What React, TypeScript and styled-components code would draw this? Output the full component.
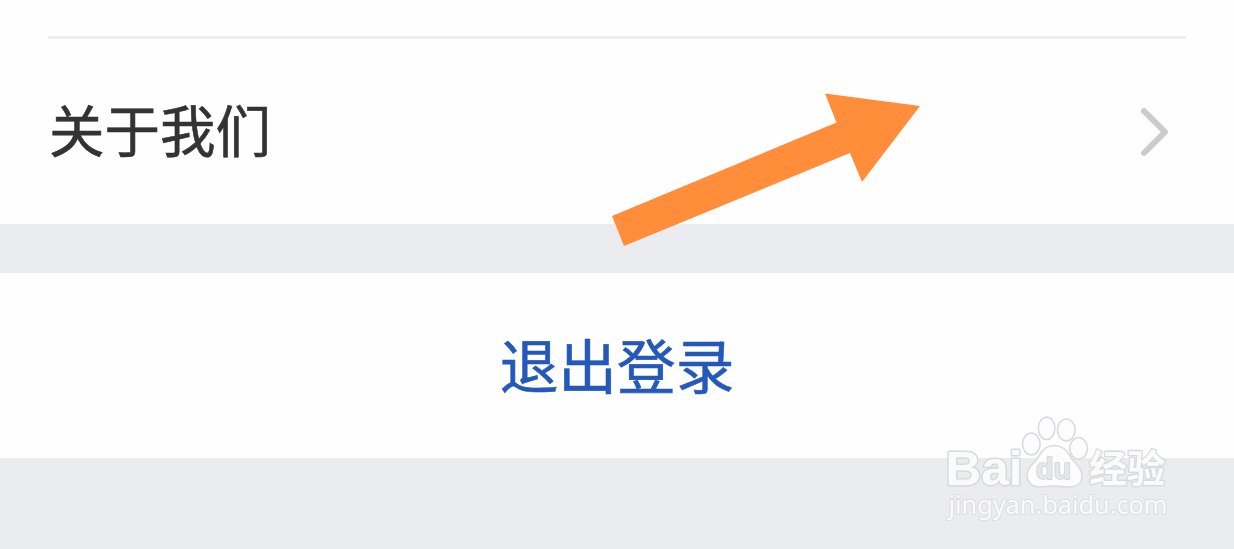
import React from 'react';
import styled, { createGlobalStyle } from 'styled-components';

const GlobalStyle = createGlobalStyle`
  body {
    margin: 0;
    background: #eaecf0;
    font-family: 'Noto Sans CJK SC', sans-serif;
  }
`;

const Screen = styled.main`
  position: relative;
  display: flex;
  flex-direction: column;
  width: 1234px;
  height: 549px;
  overflow: hidden;
  background: #eaecf0;
`;

const Section = styled.section`
  display: flex;
  flex-direction: column;
  box-sizing: border-box;
  height: 224px;
  padding: 36px 48px 0;
  background: #fefefe;
`;

const Divider = styled.hr`
  flex: none;
  width: 1138px;
  height: 3px;
  margin: 0;
  border: 0;
  background: #eeeeee;
`;

const Row = styled.div`
  display: flex;
  flex: 1;
  align-items: center;
  justify-content: space-between;
  padding: 0 16px 0 1px;
`;

const RowLabel = styled.span`
  padding-bottom: 7px;
  color: #333333;
  font-size: 55.5px;
  line-height: 80px;
  -webkit-text-stroke: 0.6px #333333;
`;

const Chevron = styled.svg`
  width: 32px;
  height: 52px;
`;

const LogoutButton = styled.button`
  display: flex;
  align-items: center;
  justify-content: center;
  width: 100%;
  height: 185px;
  margin: 49px 0 0;
  padding: 0 0 4px;
  border: 0;
  background: #fefefe;
  color: #2459b9;
  font-family: inherit;
  font-size: 58.7px;
  line-height: 84px;
  -webkit-text-stroke: 0.6px #2459b9;
`;

const Pointer = styled.svg`
  position: absolute;
  left: 600px;
  top: 80px;
  width: 340px;
  height: 180px;
`;

const Watermark = styled.svg`
  position: absolute;
  left: 934px;
  top: 405px;
  width: 250px;
  height: 130px;

  text {
    paint-order: stroke;
    stroke-linejoin: round;
  }
`;

export default function App() {
  return (
    <>
      <GlobalStyle />
      <Screen>
        <Section>
          <Divider />
          <Row>
            <RowLabel>关于我们</RowLabel>
            <Chevron viewBox="0 0 32 52" aria-hidden="true">
              <path
                d="M6 5 L27 26 L6 47"
                fill="none"
                stroke="#cbcbcb"
                strokeWidth="6"
                strokeLinecap="round"
                strokeLinejoin="round"
              />
            </Chevron>
          </Row>
        </Section>
        <LogoutButton type="button">退出登录</LogoutButton>

        <Pointer viewBox="600 80 340 180" aria-hidden="true">
          <path
            d="M612 216 L836.5 122.5 L825 93.5 L920 106 L862 182 L850 153 L624 246 Z"
            fill="#ff8d3a"
          />
        </Pointer>

        <Watermark viewBox="934 405 250 130">
          <g fill="#fdfdfe" stroke="#dadbde" strokeWidth="1.6">
            <ellipse cx="1031.3" cy="444" rx="8.8" ry="11" />
            <ellipse cx="1046.6" cy="428.3" rx="8.3" ry="11.2" />
            <ellipse cx="1066.3" cy="430" rx="8.8" ry="11" />
            <ellipse cx="1078.6" cy="448.3" rx="8.8" ry="10.8" />
            <path d="M1054 445.5 C1062 445.5 1067 450 1070 456 C1074 463 1082 467 1082 476 C1082 483 1077 487 1069 487 C1063 487 1060 486 1054 486 C1048 486 1045 487 1040 487 C1032 487 1027 482 1027 475 C1027 467 1035 463 1039 456 C1042 450 1046 445.5 1054 445.5 Z" />
          </g>
          <g fontFamily="Liberation Sans, sans-serif" fontWeight="700">
            <text x="945.5" y="484.5" fill="#fbfbfc" stroke="#d8d9dc" strokeWidth="3" fontSize="49" textLength="77" lengthAdjust="spacingAndGlyphs">Bai</text>
            <text x="1036" y="479" fill="#e6e7ea" stroke="#cfd0d4" strokeWidth="1.6" fontSize="29" textLength="35" lengthAdjust="spacingAndGlyphs">du</text>
          </g>
          <text x="1089" y="482" fill="#fbfbfc" stroke="#d8d9dc" strokeWidth="2.6" fontFamily="Noto Sans CJK SC, sans-serif" fontWeight="700" fontSize="38" textLength="76" lengthAdjust="spacingAndGlyphs">经验</text>
          <text x="948.5" y="514" fill="#fbfbfc" stroke="#dcdde1" strokeWidth="2" fontFamily="Noto Sans, sans-serif" fontSize="25" textLength="219" lengthAdjust="spacingAndGlyphs">jingyan.baidu.com</text>
        </Watermark>
      </Screen>
    </>
  );
}
